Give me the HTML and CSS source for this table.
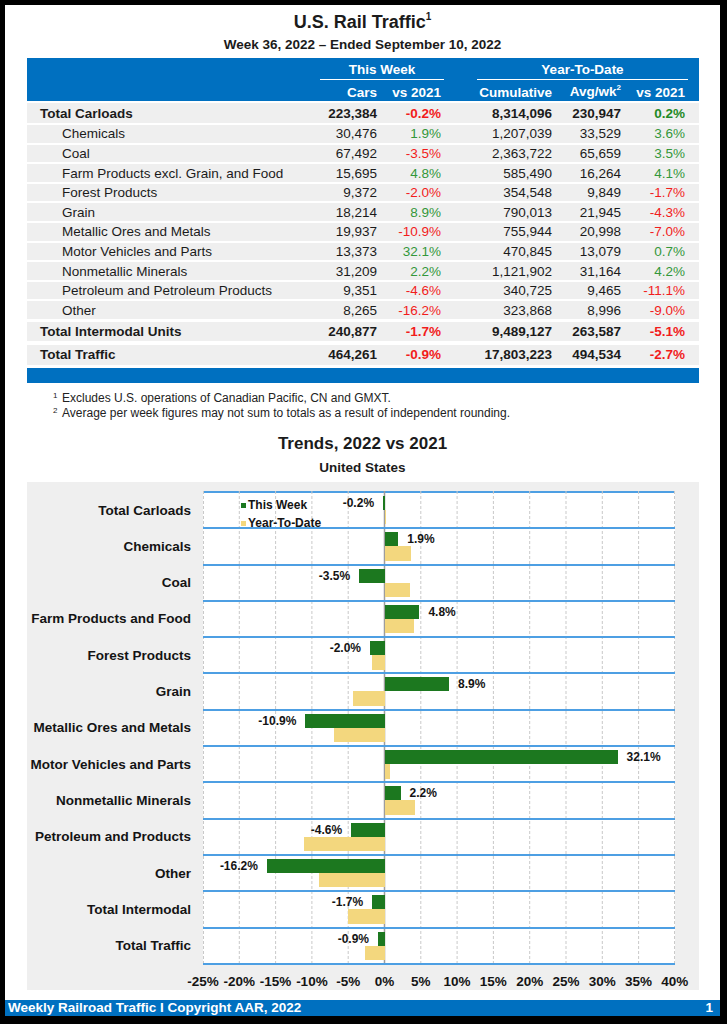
FILE: index.html
```html
<!DOCTYPE html>
<html lang="en">
<head>
<meta charset="utf-8">
<title>U.S. Rail Traffic</title>
<link rel="stylesheet" href="styles.css">
</head>
<body>
<div class="page">
  <h1 class="title">U.S. Rail Traffic<sup class="sup">1</sup></h1>
  <div class="subtitle">Week 36, 2022 – Ended September 10, 2022</div>

  <div class="table">
    <div class="thead">
      <div class="hgroup">
        <div class="grp grp-week">This Week</div>
        <div class="grp grp-ytd">Year-To-Date</div>
      </div>
      <div class="row hrow">
        <div class="lbl"></div><div>Cars</div><div>vs 2021</div><div>Cumulative</div><div>Avg/wk<sup class="sup-s">2</sup></div><div>vs 2021</div>
      </div>
    </div>

    <div class="row r-total r-first">
      <div class="lbl">Total Carloads</div><div>223,384</div><div class="neg">-0.2%</div><div>8,314,096</div><div>230,947</div><div class="pos">0.2%</div>
    </div>
    <div class="row r-sub">
      <div class="lbl">Chemicals</div><div>30,476</div><div class="pos">1.9%</div><div>1,207,039</div><div>33,529</div><div class="pos">3.6%</div>
    </div>
    <div class="row r-sub">
      <div class="lbl">Coal</div><div>67,492</div><div class="neg">-3.5%</div><div>2,363,722</div><div>65,659</div><div class="pos">3.5%</div>
    </div>
    <div class="row r-sub">
      <div class="lbl">Farm Products excl. Grain, and Food</div><div>15,695</div><div class="pos">4.8%</div><div>585,490</div><div>16,264</div><div class="pos">4.1%</div>
    </div>
    <div class="row r-sub">
      <div class="lbl">Forest Products</div><div>9,372</div><div class="neg">-2.0%</div><div>354,548</div><div>9,849</div><div class="neg">-1.7%</div>
    </div>
    <div class="row r-sub">
      <div class="lbl">Grain</div><div>18,214</div><div class="pos">8.9%</div><div>790,013</div><div>21,945</div><div class="neg">-4.3%</div>
    </div>
    <div class="row r-sub">
      <div class="lbl">Metallic Ores and Metals</div><div>19,937</div><div class="neg">-10.9%</div><div>755,944</div><div>20,998</div><div class="neg">-7.0%</div>
    </div>
    <div class="row r-sub">
      <div class="lbl">Motor Vehicles and Parts</div><div>13,373</div><div class="pos">32.1%</div><div>470,845</div><div>13,079</div><div class="pos">0.7%</div>
    </div>
    <div class="row r-sub">
      <div class="lbl">Nonmetallic Minerals</div><div>31,209</div><div class="pos">2.2%</div><div>1,121,902</div><div>31,164</div><div class="pos">4.2%</div>
    </div>
    <div class="row r-sub">
      <div class="lbl">Petroleum and Petroleum Products</div><div>9,351</div><div class="neg">-4.6%</div><div>340,725</div><div>9,465</div><div class="neg">-11.1%</div>
    </div>
    <div class="row r-sub">
      <div class="lbl">Other</div><div>8,265</div><div class="neg">-16.2%</div><div>323,868</div><div>8,996</div><div class="neg">-9.0%</div>
    </div>
    <div class="row r-total r-inter">
      <div class="lbl">Total Intermodal Units</div><div>240,877</div><div class="neg">-1.7%</div><div>9,489,127</div><div>263,587</div><div class="neg">-5.1%</div>
    </div>
    <div class="row r-total r-traffic">
      <div class="lbl">Total Traffic</div><div>464,261</div><div class="neg">-0.9%</div><div>17,803,223</div><div>494,534</div><div class="neg">-2.7%</div>
    </div>
    <div class="tfoot"></div>
  </div>

  <div class="notes">
    <p class="note"><span class="mark">1</span>Excludes U.S. operations of Canadian Pacific, CN and GMXT.</p>
    <p class="note"><span class="mark">2</span>Average per week figures may not sum to totals as a result of independent rounding.</p>
  </div>

  <h2 class="chart-title">Trends, 2022 vs 2021</h2>
  <div class="chart-sub">United States</div>

  <div class="chart">
    <div class="chart-body">
      <div class="cats">
        <div class="cat-label">Total Carloads</div>
        <div class="cat-label">Chemicals</div>
        <div class="cat-label">Coal</div>
        <div class="cat-label">Farm Products and Food</div>
        <div class="cat-label">Forest Products</div>
        <div class="cat-label">Grain</div>
        <div class="cat-label">Metallic Ores and Metals</div>
        <div class="cat-label">Motor Vehicles and Parts</div>
        <div class="cat-label">Nonmetallic Minerals</div>
        <div class="cat-label">Petroleum and Products</div>
        <div class="cat-label">Other</div>
        <div class="cat-label">Total Intermodal</div>
        <div class="cat-label">Total Traffic</div>
      </div>
      <div class="plot">
        <svg class="grid" width="472" height="474" viewBox="0 0 472 474" aria-hidden="true">
          <g stroke="#c9c9c9" stroke-width="1" stroke-dasharray="3 2">
            <line x1="0.5" y1="0" x2="0.5" y2="474"/>
            <line x1="36.3" y1="0" x2="36.3" y2="474"/>
            <line x1="72.6" y1="0" x2="72.6" y2="474"/>
            <line x1="108.9" y1="0" x2="108.9" y2="474"/>
            <line x1="145.2" y1="0" x2="145.2" y2="474"/>
            <line x1="217.8" y1="0" x2="217.8" y2="474"/>
            <line x1="254.1" y1="0" x2="254.1" y2="474"/>
            <line x1="290.4" y1="0" x2="290.4" y2="474"/>
            <line x1="326.7" y1="0" x2="326.7" y2="474"/>
            <line x1="363" y1="0" x2="363" y2="474"/>
            <line x1="399.3" y1="0" x2="399.3" y2="474"/>
            <line x1="435.6" y1="0" x2="435.6" y2="474"/>
            <line x1="471.5" y1="0" x2="471.5" y2="474"/>
          </g>
          <line x1="181.5" y1="0" x2="181.5" y2="474" stroke="#9d9d9d" stroke-width="1.5"/>
        </svg>

        <div class="legend">
          <div class="leg"><span class="swatch sw-tw"></span>This Week</div>
          <div class="leg"><span class="swatch sw-ytd"></span>Year-To-Date</div>
        </div>

        <div class="cat">
          <div class="brow nrow"><span class="val">-0.2%</span><span class="bar tw" style="width:1.45px"></span></div>
          <div class="brow prow"><span class="bar ytd" style="width:1.45px"></span></div>
        </div>
        <div class="cat">
          <div class="brow prow"><span class="bar tw" style="width:13.8px"></span><span class="val">1.9%</span></div>
          <div class="brow prow"><span class="bar ytd" style="width:26.1px"></span></div>
        </div>
        <div class="cat">
          <div class="brow nrow"><span class="val">-3.5%</span><span class="bar tw" style="width:25.4px"></span></div>
          <div class="brow prow"><span class="bar ytd" style="width:25.4px"></span></div>
        </div>
        <div class="cat">
          <div class="brow prow"><span class="bar tw" style="width:34.9px"></span><span class="val">4.8%</span></div>
          <div class="brow prow"><span class="bar ytd" style="width:29.8px"></span></div>
        </div>
        <div class="cat">
          <div class="brow nrow"><span class="val">-2.0%</span><span class="bar tw" style="width:14.5px"></span></div>
          <div class="brow nrow"><span class="bar ytd" style="width:12.3px"></span></div>
        </div>
        <div class="cat">
          <div class="brow prow"><span class="bar tw" style="width:64.6px"></span><span class="val">8.9%</span></div>
          <div class="brow nrow"><span class="bar ytd" style="width:31.2px"></span></div>
        </div>
        <div class="cat">
          <div class="brow nrow"><span class="val">-10.9%</span><span class="bar tw" style="width:79.2px"></span></div>
          <div class="brow nrow"><span class="bar ytd" style="width:50.8px"></span></div>
        </div>
        <div class="cat">
          <div class="brow prow"><span class="bar tw" style="width:233.1px"></span><span class="val">32.1%</span></div>
          <div class="brow prow"><span class="bar ytd" style="width:5.1px"></span></div>
        </div>
        <div class="cat">
          <div class="brow prow"><span class="bar tw" style="width:16px"></span><span class="val">2.2%</span></div>
          <div class="brow prow"><span class="bar ytd" style="width:30.5px"></span></div>
        </div>
        <div class="cat">
          <div class="brow nrow"><span class="val">-4.6%</span><span class="bar tw" style="width:33.4px"></span></div>
          <div class="brow nrow"><span class="bar ytd" style="width:80.6px"></span></div>
        </div>
        <div class="cat">
          <div class="brow nrow"><span class="val">-16.2%</span><span class="bar tw" style="width:117.6px"></span></div>
          <div class="brow nrow"><span class="bar ytd" style="width:65.4px"></span></div>
        </div>
        <div class="cat">
          <div class="brow nrow"><span class="val">-1.7%</span><span class="bar tw" style="width:12.3px"></span></div>
          <div class="brow nrow"><span class="bar ytd" style="width:37px"></span></div>
        </div>
        <div class="cat">
          <div class="brow nrow"><span class="val">-0.9%</span><span class="bar tw" style="width:6.5px"></span></div>
          <div class="brow nrow"><span class="bar ytd" style="width:19.6px"></span></div>
        </div>
      </div>
    </div>
    <div class="axis">
      <span>-25%</span><span>-20%</span><span>-15%</span><span>-10%</span><span>-5%</span><span>0%</span><span>5%</span><span>10%</span><span>15%</span><span>20%</span><span>25%</span><span>30%</span><span>35%</span><span>40%</span>
    </div>
  </div>

  <div class="footer">
    <span>Weekly Railroad Traffic I Copyright AAR, 2022</span>
    <span>1</span>
  </div>
</div>
</body>
</html>
```

FILE: styles.css
```css
* { box-sizing: border-box; margin: 0; padding: 0; }
html, body { background: #000; }
body {
  font-family: "Liberation Sans", Arial, Helvetica, sans-serif;
  color: #1b1b1b;
}
.page {
  width: 715px;
  height: 1011px;
  margin: 5px 0 0 5px;
  background: #fff;
  display: flex;
  flex-direction: column;
}

/* Titles */
.title {
  margin-top: 6px;
  font-size: 18px;
  line-height: 22px;
  font-weight: 700;
  text-align: center;
}
.sup {
  font-size: 10px;
  vertical-align: baseline;
  position: relative;
  top: -8px;
}
.subtitle {
  margin-top: 0;
  font-size: 13.5px;
  line-height: 18px;
  font-weight: 700;
  text-align: center;
}

/* Table */
.table {
  margin: 4px 21px 0 22px;
  width: 672px;
  font-size: 13.5px;
}
.row, .hgroup {
  display: grid;
  grid-template-columns: 290px 60px 64px 111px 69px 64px;
  padding-right: 14px;
  align-items: center;
}
.row > div { text-align: right; white-space: nowrap; }
.row > .lbl { text-align: left; padding-left: 13px; }
.thead {
  height: 43px;
  padding-top: 3px;
  background: #0070c0;
  color: #fff;
  font-weight: 700;
}
.hgroup { height: 19.5px; }
.grp {
  text-align: center;
  line-height: 18px;
  border-bottom: 1.5px solid #fff;
}
.grp-week { grid-column: 2 / 4; margin: 0 -3px 0 3px; }
.grp-ytd { grid-column: 4 / 7; margin: 0 -3px 0 36px; }
.hrow { height: 20.5px; padding-top: 1px; line-height: 19px; }
.sup-s {
  font-size: 8px;
  vertical-align: baseline;
  position: relative;
  top: -6px;
}
.r-sub, .r-total { background: #efefef; }
.r-sub { height: 17.5px; margin-top: 2.1px; }
.r-sub > .lbl { padding-left: 35px; }
.r-total { font-weight: 700; }
.r-first { height: 20px; margin-top: 2px; }
.r-inter { height: 19px; margin-top: 3.5px; }
.r-traffic { height: 20px; margin-top: 3.5px; }
.row > .neg { color: #f21c1c; }
.row > .pos { color: #33973a; }
.r-total > .pos { color: #1f8a26; }
.tfoot { height: 15px; margin-top: 3px; background: #0070c0; }

/* Notes */
.notes { margin-top: 8.5px; padding-left: 48px; font-size: 12px; line-height: 15px; color: #222; }
.note { display: flex; }
.mark {
  width: 9px;
  font-size: 8px;
  line-height: 10px;
}

/* Chart titles */
.chart-title {
  margin-top: 11.5px;
  font-size: 17px;
  line-height: 22px;
  font-weight: 700;
  text-align: center;
}
.chart-sub {
  margin-top: 4px;
  font-size: 13.5px;
  line-height: 18px;
  font-weight: 700;
  text-align: center;
}

/* Chart */
.chart {
  margin: 5px 21px 0 22px;
  width: 672px;
  height: 508px;
  padding-top: 9px;
  background: #efefef;
}
.chart-body { display: flex; gap: 12px; }
.cats { width: 164px; padding-top: 2px; }
.cat-label {
  height: 36.3px;
  padding-bottom: 2px;
  display: flex;
  align-items: center;
  justify-content: flex-end;
  font-size: 13.5px;
  font-weight: 700;
  color: #141414;
  white-space: nowrap;
}
.plot {
  position: relative;
  width: 472px;
  background: #fff;
  border-top: 2px solid #4d9fe3;
}
.grid { position: absolute; left: 0; top: -2px; }
.cat {
  position: relative;
  height: 36.3px;
  padding-top: 3px;
  border-bottom: 2px solid #4d9fe3;
}
.brow { display: flex; align-items: center; height: 14px; }
.brow + .brow { height: 14.5px; }
.prow { padding-left: 181.5px; }
.nrow { width: 181.5px; justify-content: flex-end; }
.bar { display: block; height: 100%; flex: none; }
.bar.tw { background: #1c781f; }
.bar.ytd { background: #f3d77e; }
.val {
  margin: 0 9px;
  font-size: 12px;
  line-height: 14px;
  font-weight: 700;
  color: #141414;
  white-space: nowrap;
}
.legend {
  position: absolute;
  left: 38px;
  top: 4px;
  z-index: 2;
  font-size: 12px;
  font-weight: 700;
  line-height: 17.6px;
  color: #141414;
}
.leg { display: flex; align-items: center; }
.swatch { width: 5px; height: 5px; margin-right: 2px; }
.sw-tw { background: #1c781f; }
.sw-ytd { background: #f3d77e; }

.axis {
  display: flex;
  margin-top: 8px;
  padding-left: 157.85px;
  height: 17px;
  line-height: 17px;
  font-size: 13.5px;
  font-weight: 700;
  color: #141414;
}
.axis span { width: 36.3px; flex: none; text-align: center; white-space: nowrap; }

/* Footer */
.footer {
  margin-top: auto;
  height: 16px;
  padding: 0 7px 0 3px;
  display: flex;
  justify-content: space-between;
  align-items: center;
  background: #0070c0;
  color: #fff;
  font-size: 13.5px;
  font-weight: 700;
  line-height: 16px;
}
```
